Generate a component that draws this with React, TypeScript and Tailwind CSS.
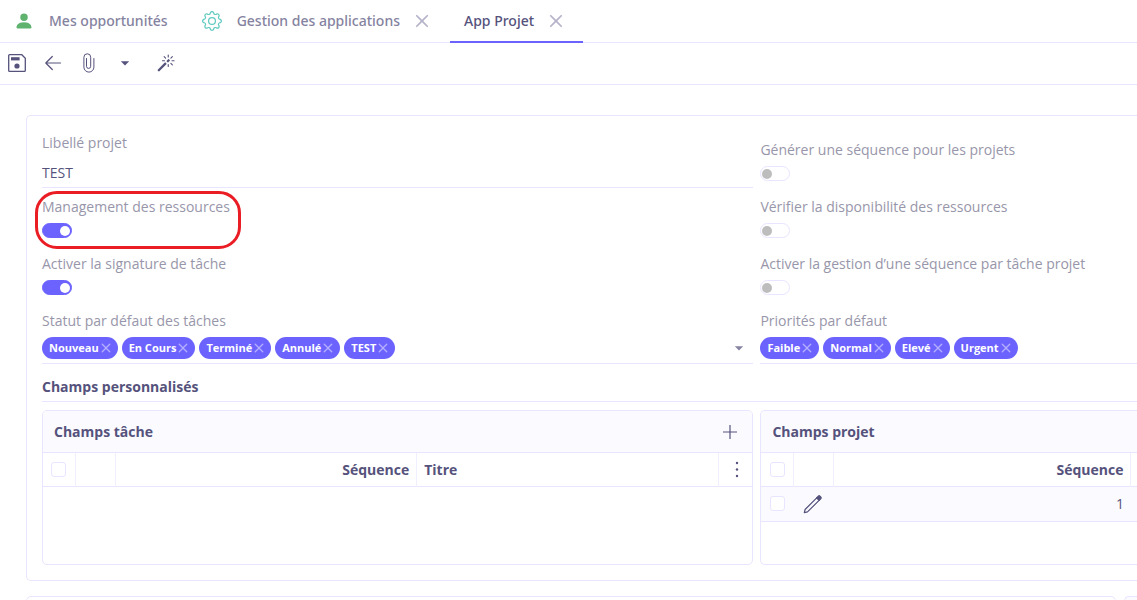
import { useState } from 'react';
import type { ComponentType, ReactNode } from 'react';
import { BsGear, BsMagic, BsPersonFill, BsX } from 'react-icons/bs';
import { MdArrowDropDown } from 'react-icons/md';
import clsx from 'clsx';

type IconProps = { className?: string };

const SaveIcon = ({ className }: IconProps) => (
  <svg viewBox="0 0 20 20" className={className} fill="none" stroke="currentColor" strokeWidth="1.3" aria-hidden="true">
    <path d="M2.6 1.7h12.2l3.5 3.5v12.2a.9.9 0 0 1-.9.9H2.6a.9.9 0 0 1-.9-.9V2.6a.9.9 0 0 1 .9-.9z" />
    <path d="M4 4.2h8.6v3.2H4z" fill="currentColor" stroke="none" />
    <circle cx="10" cy="13" r="2.6" fill="currentColor" stroke="none" />
  </svg>
);

const BackIcon = ({ className }: IconProps) => (
  <svg viewBox="0 0 20 20" className={className} fill="none" stroke="currentColor" strokeWidth="1.2" strokeLinecap="round" strokeLinejoin="round" aria-hidden="true">
    <path d="M17.5 10H2.8M9.3 3.5 2.8 10l6.5 6.5" />
  </svg>
);

const ClipIcon = ({ className }: IconProps) => (
  <svg viewBox="0 0 20 20" className={className} fill="none" stroke="currentColor" strokeWidth="1" strokeLinecap="round" aria-hidden="true">
    <path d="M7.5 5.5v7.8a2.1 2.1 0 0 0 4.2 0V4.2a3.4 3.4 0 0 0-6.8 0v9.9a5 5 0 0 0 10 0V5.5" />
  </svg>
);

const PencilIcon = ({ className }: IconProps) => (
  <svg viewBox="0 0 20 20" className={className} fill="none" stroke="currentColor" strokeWidth="1.2" strokeLinejoin="round" aria-hidden="true">
    <path d="M1.3 18.7 2.1 15.5 14.2 3.4l2.4 2.4L4.5 17.9z" />
    <path d="M13.6 3.9 15.4 2.1a1.1 1.1 0 0 1 1.5 0l1 1a1.1 1.1 0 0 1 0 1.5l-1.8 1.8z" fill="currentColor" />
  </svg>
);

const PlusIcon = ({ className }: IconProps) => (
  <svg viewBox="0 0 20 20" className={className} fill="none" stroke="currentColor" strokeWidth="1.2" aria-hidden="true">
    <path d="M10 3v14M3 10h14" />
  </svg>
);

const DotsIcon = ({ className }: IconProps) => (
  <svg viewBox="0 0 20 20" className={className} fill="currentColor" aria-hidden="true">
    <circle cx="10" cy="4" r="1.2" />
    <circle cx="10" cy="10.5" r="1.2" />
    <circle cx="10" cy="17" r="1.2" />
  </svg>
);

interface TabProps {
  label: string;
  icon?: ComponentType<IconProps>;
  iconClass?: string;
  active?: boolean;
  closable?: boolean;
}

const Tab = ({ label, icon: Icon, iconClass, active, closable }: TabProps) => (
  <div
    className={clsx(
      'flex h-[43px] items-center gap-3.5 border-b-2 px-3.5',
      active ? 'min-w-[133px] border-[#6c63ff] text-[#55527c]' : 'border-transparent text-[#8583a0]'
    )}
  >
    <a href="#" className="flex items-center gap-[15px] font-['Noto_Sans',sans-serif] text-[14px] font-medium">
      {Icon && <Icon className={iconClass} />}
      {label}
    </a>
    {closable && (
      <button type="button" aria-label={`Fermer ${label}`}>
        <BsX className="-m-1.5 size-7 text-[#b5b3c9]" />
      </button>
    )}
  </div>
);

const Field = ({ id, label, children }: { id: string; label: string; children: ReactNode }) => (
  <div className="relative flex flex-col gap-[7px] self-end">
    <label htmlFor={id} className="h-5 self-start leading-[22px] text-[#9896aa]">
      {label}
    </label>
    {children}
  </div>
);

const Switch = ({ id, label, on, highlight }: { id: string; label: string; on?: boolean; highlight?: boolean }) => {
  const [checked, setChecked] = useState(!!on);

  return (
    <Field id={id} label={label}>
      <div className="h-[22px]">
        <input
          id={id}
          type="checkbox"
          role="switch"
          checked={checked}
          onChange={(e) => setChecked(e.target.checked)}
          className="flex h-[15px] w-[30px] appearance-none items-center rounded-full border border-[#e7e5ff] px-px before:size-[10px] before:rounded-full before:bg-[#bdbdbd] checked:justify-end checked:border-[#6c63ff] checked:bg-[#6c63ff] checked:before:bg-white"
        />
      </div>
      {highlight && (
        <div className="pointer-events-none absolute -top-[5px] -left-[7px] h-[58px] w-[206px] rounded-[22px] border-3 border-[#ea1c24]" />
      )}
    </Field>
  );
};

interface TagSelectProps {
  id: string;
  label: string;
  initial: string[];
  caret?: boolean;
}

const TagSelect = ({ id, label, initial, caret }: TagSelectProps) => {
  const [tags, setTags] = useState(initial);

  return (
    <Field id={id} label={label}>
      <div className="flex items-center gap-1 border-b border-[#e7e5ff] pb-1">
        {tags.map((tag) => (
          <span
            key={tag}
            className="flex h-[22px] items-center rounded-full bg-[#6c63ff] pr-0.5 pl-[7px] text-[11px] font-bold text-white"
          >
            {tag}
            <button
              type="button"
              aria-label={`Retirer ${tag}`}
              className="-ml-[3px]"
              onClick={() => setTags(tags.filter((t) => t !== tag))}
            >
              <BsX className="size-5 text-[#b5b1ff]" />
            </button>
          </span>
        ))}
        <input id={id} className="h-5 min-w-0 flex-1 outline-none" />
        {caret && (
          <button type="button" aria-label="Ouvrir la liste">
            <MdArrowDropDown className="mr-1 size-5 text-[#8583a0]" />
          </button>
        )}
      </div>
    </Field>
  );
};

const Check = ({ label }: { label: string }) => (
  <input
    type="checkbox"
    aria-label={label}
    className="mx-auto block size-[15px] appearance-none rounded-[3px] border border-[#e7e5ff] bg-white checked:bg-[#6c63ff]"
  />
);

interface PanelProps {
  title: string;
  action?: ReactNode;
  className?: string;
  children: ReactNode;
}

const Panel = ({ title, action, className, children }: PanelProps) => (
  <section className={clsx('min-h-[155px] overflow-hidden border-y border-l border-[#e7e5ff]', className)}>
    <header className="flex h-[42px] items-center justify-between border-b border-[#e7e5ff] bg-[#fafaff] pr-3 pl-[11px]">
      <h3 className="font-bold">{title}</h3>
      {action}
    </header>
    {children}
  </section>
);

const cell = 'border-r border-[#f0efff]';

export default function App() {
  const [name, setName] = useState('TEST');

  return (
    <div className="h-screen overflow-hidden bg-white font-['Open_Sans','Noto_Sans',sans-serif] text-[14px] text-[#55527c]">
      <nav className="flex h-[43px] gap-1.5 border-b border-[#e7e5ff]">
        <Tab label="Mes opportunités" icon={BsPersonFill} iconClass="size-5 text-[#5fb36f]" />
        <Tab label="Gestion des applications" icon={BsGear} iconClass="size-5 text-[#62cbc0]" closable />
        <Tab label="App Projet" active closable />
      </nav>

      <div className="flex h-[42px] items-center gap-4 border-b border-[#e7e5ff] px-[7px] pb-0.5">
        <button type="button" aria-label="Enregistrer">
          <SaveIcon className="size-5" />
        </button>
        <button type="button" aria-label="Retour">
          <BackIcon className="size-5" />
        </button>
        <button type="button" aria-label="Pièces jointes">
          <ClipIcon className="size-5" />
        </button>
        <button type="button" aria-label="Plus">
          <MdArrowDropDown className="size-5" />
        </button>
        <button type="button" aria-label="Actions" className="ml-1.5">
          <BsMagic className="size-[18px]" />
        </button>
      </div>

      <main className="pt-[30px] pl-[26px]">
        <form className="grid grid-cols-[minmax(0,34fr)_minmax(0,18fr)] gap-x-[7px] gap-y-2 rounded-l-[5px] border-y border-l border-[#e7e5ff] pt-4 pb-[15px] pl-[15px]">
          <Field id="name" label="Libellé projet">
            <input
              id="name"
              value={name}
              onChange={(e) => setName(e.target.value)}
              className="h-[29px] w-full border-b border-[#e7e5ff] pb-0.5 outline-none"
            />
          </Field>
          <Switch id="seqProjet" label="Générer une séquence pour les projets" />
          <Switch id="ressources" label="Management des ressources" on highlight />
          <Switch id="dispo" label="Vérifier la disponibilité des ressources" />
          <Switch id="signature" label="Activer la signature de tâche" on />
          <Switch id="seqTache" label="Activer la gestion d’une séquence par tâche projet" />
          <TagSelect
            id="statuts"
            label="Statut par défaut des tâches"
            initial={['Nouveau', 'En Cours', 'Terminé', 'Annulé', 'TEST']}
            caret
          />
          <TagSelect id="priorites" label="Priorités par défaut" initial={['Faible', 'Normal', 'Elevé', 'Urgent']} />

          <h2 className="col-span-2 h-[30px] border-b border-[#e7e5ff] leading-[30px] font-bold">
            Champs personnalisés
          </h2>

          <Panel
            title="Champs tâche"
            className="rounded-[5px] border-r"
            action={
              <button type="button" aria-label="Ajouter">
                <PlusIcon className="size-5" />
              </button>
            }
          >
            <table className="w-full table-fixed border-collapse">
              <thead>
                <tr className="h-[33px] border-b border-[#e7e5ff]">
                  <th className={clsx(cell, 'w-8')}>
                    <Check label="Tout sélectionner" />
                  </th>
                  <th className={clsx(cell, 'w-10')} />
                  <th className={clsx(cell, 'px-[7px] text-right font-bold')}>Séquence</th>
                  <th className={clsx(cell, 'px-[7px] text-left font-bold')}>Titre</th>
                  <th className="w-[34px]">
                    <button type="button" aria-label="Colonnes" className="block pl-2">
                      <DotsIcon className="size-5" />
                    </button>
                  </th>
                </tr>
              </thead>
            </table>
          </Panel>

          <Panel title="Champs projet" className="rounded-l-[5px]">
            <table className="w-full table-fixed border-collapse">
              <thead>
                <tr className="h-[33px] border-b border-[#e7e5ff]">
                  <th className={clsx(cell, 'w-8')}>
                    <Check label="Tout sélectionner" />
                  </th>
                  <th className={clsx(cell, 'w-10')} />
                  <th className={clsx(cell, 'px-[7px] text-right font-bold')}>Séquence</th>
                  <th className="w-1.5" />
                </tr>
              </thead>
              <tbody>
                <tr className="h-[35px] border-b border-[#e7e5ff] bg-[#fafaff]">
                  <td>
                    <Check label="Sélectionner la ligne" />
                  </td>
                  <td>
                    <button type="button" aria-label="Modifier" className="mx-auto block">
                      <PencilIcon className="size-5" />
                    </button>
                  </td>
                  <td className="px-[7px] text-right">1</td>
                  <td />
                </tr>
              </tbody>
            </table>
          </Panel>
        </form>

        <div className="mt-[15px] flex gap-2">
          <section className="h-20 flex-1 rounded-[5px] border border-[#e7e5ff]" />
          <section className="h-20 w-[13px] rounded-l-[5px] border-y border-l border-[#e7e5ff] bg-[#fafaff]" />
        </div>
      </main>
    </div>
  );
}
